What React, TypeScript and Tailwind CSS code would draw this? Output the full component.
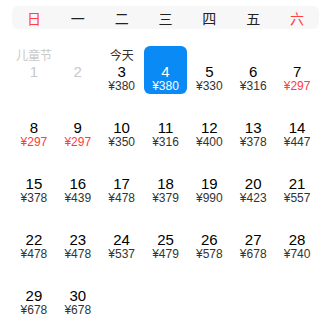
const WEEK = ['日', '一', '二', '三', '四', '五', '六'];

type Day = { d: number; price?: number; label?: string; past?: boolean; low?: boolean };

const PRICES: Record<number, number> = {
  3: 380, 4: 380, 5: 330, 6: 316, 7: 297, 8: 297, 9: 297, 10: 350, 11: 316, 12: 400,
  13: 378, 14: 447, 15: 378, 16: 439, 17: 478, 18: 379, 19: 990, 20: 423, 21: 557,
  22: 478, 23: 478, 24: 537, 25: 479, 26: 578, 27: 678, 28: 740, 29: 678, 30: 678,
};

const DAYS: Day[] = Array.from({ length: 30 }, (_, i) => {
  const d = i + 1;
  return {
    d,
    price: PRICES[d],
    past: d < 3,
    label: d === 1 ? '儿童节' : d === 3 ? '今天' : undefined,
    low: PRICES[d] === 297,
  };
});

const SELECTED = 4;
const NUM_FONT = { fontFamily: '"Liberation Sans", "Noto Sans CJK SC", sans-serif' };

export default function App() {
  return (
    <div
      className="w-[331px] h-[334px] bg-white px-3 pt-1.5"
      style={{ fontFamily: '"Noto Sans CJK SC", "Liberation Sans", sans-serif' }}
    >
      <div className="grid grid-cols-7 h-[23px] items-center rounded-md bg-[#f7f7f7] text-[14px] text-[#222]">
        {WEEK.map((w, i) => (
          <div key={w} className={`text-center leading-none ${i === 0 || i === 6 ? 'text-[#ff4040]' : ''}`}>
            {w}
          </div>
        ))}
      </div>

      <div className="grid grid-cols-7 gap-y-2 mt-[17px]">
        {DAYS.map((day) => {
          const sel = day.d === SELECTED;
          return (
            <div
              key={day.d}
              className={`h-12 pt-[2px] flex flex-col items-center rounded-md ${sel ? 'bg-[#0a8af5] text-white' : ''}`}
            >
              <span className={`h-[14px] text-[12px] leading-[14px] ${day.past ? 'text-[#c8c8c8]' : 'text-[#333]'}`}>
                {day.label ?? ''}
              </span>
              <span
                style={NUM_FONT}
                className={`mt-[2px] text-[15px] leading-[15px] ${sel ? 'text-white' : day.past ? 'text-[#c8c8c8]' : 'text-black'}`}
              >
                {day.d}
              </span>
              {day.price && (
                <span
                  style={NUM_FONT}
                  className={`text-[12px] leading-[14px] ${
                    sel ? 'text-white' : day.low ? 'text-[#ff3b3b]' : 'text-[#333]'
                  }`}
                >
                  ¥{day.price}
                </span>
              )}
            </div>
          );
        })}
      </div>
    </div>
  );
}
